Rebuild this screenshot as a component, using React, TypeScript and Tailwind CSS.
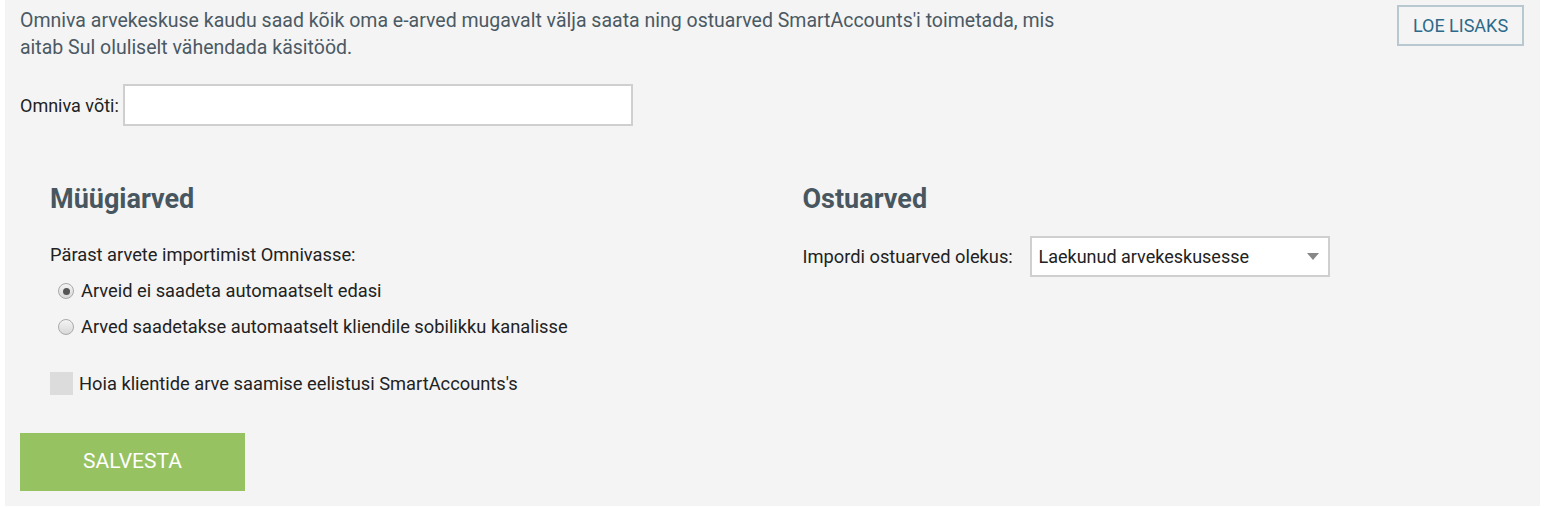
import React from 'react';

const font = { fontFamily: 'Roboto, "Liberation Sans", sans-serif' };

function Radio({ checked }: { checked?: boolean }) {
  return (
    <span className="inline-flex h-[16px] w-[16px] shrink-0 items-center justify-center rounded-full border border-[#a9a9a9] bg-gradient-to-b from-[#f4f4f4] to-[#d8d8d8]">
      {checked && <span className="h-[7px] w-[7px] rounded-full bg-[#555]" />}
    </span>
  );
}

export default function App() {
  return (
    <div className="min-h-[507px] bg-white pl-[5px] pr-[10px]" style={font}>
      <div className="h-[506px] bg-[#f4f4f4] px-[15px] pt-[5px]">
        {/* Intro + read more */}
        <div className="flex items-start justify-between">
          <p className="mt-[2px] w-[1060px] text-[19.5px] leading-[27px] text-[#4b5963]">
            Omniva arvekeskuse kaudu saad kõik oma e-arved mugavalt välja saata ning ostuarved SmartAccounts'i toimetada, mis aitab Sul oluliselt vähendada käsitööd.
          </p>
          <button className="mr-[1px] h-[41px] w-[127px] border-2 border-[#b8c8d0] text-[18px] uppercase text-[#2d6a8a]">
            Loe lisaks
          </button>
        </div>

        {/* Key */}
        <div className="mt-[23px] flex items-center">
          <label className="text-[18px] text-[#222]">Omniva võti:</label>
          <input className="ml-[4px] h-[42px] w-[510px] border-2 border-[#cfcfcf] bg-white outline-none" />
        </div>

        {/* Columns */}
        <div className="mt-[57px] grid grid-cols-2">
          <div className="pl-[30px]">
            <h2 className="text-[27px] font-bold leading-[32px] text-[#48565f]">Müügiarved</h2>
            <p className="mt-[29px] text-[18.3px] leading-[22px] text-[#222]">Pärast arvete importimist Omnivasse:</p>
            <div className="mt-[13px] flex h-[24px] items-center pl-[8px]">
              <Radio checked />
              <span className="ml-[7px] text-[18.3px] leading-[24px] text-[#222]">Arveid ei saadeta automaatselt edasi</span>
            </div>
            <div className="mt-[12px] flex h-[24px] items-center pl-[8px]">
              <Radio />
              <span className="ml-[7px] text-[18.3px] leading-[24px] text-[#222]">Arved saadetakse automaatselt kliendile sobilikku kanalisse</span>
            </div>
            <div className="mt-[33px] flex items-center">
              <span className="h-[23px] w-[23px] bg-[#dcdcdc]" />
              <span className="ml-[6px] text-[18.3px] leading-[22px] text-[#222]">Hoia klientide arve saamise eelistusi SmartAccounts's</span>
            </div>
          </div>
          <div className="pl-[30px]">
            <h2 className="text-[27px] font-bold leading-[32px] text-[#48565f]">Ostuarved</h2>
            <div className="mt-[21px] flex items-center">
              <span className="w-[227px] text-[18.3px] text-[#222]">Impordi ostuarved olekus:</span>
              <div className="relative flex h-[41px] w-[300px] items-center border-2 border-[#cfcfcf] bg-white pl-[7px]">
                <span className="text-[18px] text-[#222]">Laekunud arvekeskusesse</span>
                <svg className="absolute right-[9px] top-[15px]" width="12" height="7" viewBox="0 0 12 7">
                  <path d="M0 0h12L6 7z" fill="#888" />
                </svg>
              </div>
            </div>
          </div>
        </div>

        <button className="mt-[38px] h-[58px] w-[225px] bg-[#96c262] text-[21px] uppercase text-white">
          Salvesta
        </button>
      </div>
    </div>
  );
}
